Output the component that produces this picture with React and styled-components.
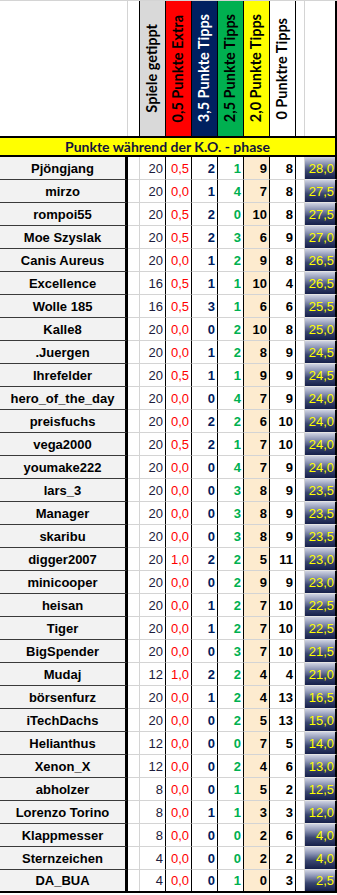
import React from "react";
import styled, { createGlobalStyle } from "styled-components";

const Global = createGlobalStyle`
  html, body { margin: 0; padding: 0; background: #fff; }
  body { font-family: "Liberation Sans", Arial, sans-serif; }
`;

const COLS = "128px 12px repeat(6, 26px) 9px 32px";

const Sheet = styled.div`
  width: 337px;
  display: flex;
  flex-direction: column;
`;

const HeaderRow = styled.div`
  display: grid;
  grid-template-columns: ${COLS};
  height: 136px;
  border-top: 1px solid #d4d4d4;
  box-sizing: border-box;
`;

const HeadCell = styled.div`
  background: ${(p) => p.$bg || "#fff"};
  color: ${(p) => p.$fg || "#000"};
  border-right: ${(p) => (p.$last ? "2px" : "1px")} solid ${(p) => p.$line || "#000"};
  display: flex;
  align-items: center;
  justify-content: center;
  box-sizing: border-box;
`;

const Vertical = styled.span`
  writing-mode: vertical-rl;
  transform: rotate(180deg);
  font-family: Lato, "Open Sans", sans-serif;
  font-weight: 700;
  font-size: 14.5px;
  white-space: nowrap;
  line-height: 1;
`;

const Title = styled.div`
  height: 21px;
  box-sizing: border-box;
  background: #ffff00;
  border-top: 2px solid #000;
  border-bottom: 2px solid #000;
  border-right: 2px solid #000;
  display: flex;
  align-items: center;
  justify-content: center;
  font-family: Lato, "Open Sans", sans-serif;
  font-weight: 700;
  font-size: 14px;
  color: #14143c;
`;

const Row = styled.div`
  display: grid;
  grid-template-columns: ${COLS};
  height: 23px;
  box-sizing: border-box;
  border-bottom: ${(p) => (p.$last ? "2px solid #000" : "none")};
`;

const Cell = styled.div`
  box-sizing: border-box;
  border-right: ${(p) => p.$br || "1px solid #000"};
  border-bottom: ${(p) => (p.$last ? "none" : `1px solid ${p.$hline || "#d4d4d4"}`)};
  background: ${(p) => p.$bg || "#fff"};
  color: ${(p) => p.$fg || "#000"};
  font-family: "Liberation Sans", Arial, sans-serif;
  font-size: 13px;
  font-weight: ${(p) => (p.$bold ? 700 : 400)};
  display: flex;
  align-items: center;
  justify-content: ${(p) => (p.$center ? "center" : "flex-end")};
  padding-right: ${(p) => (p.$center ? "0" : "2px")};
  white-space: nowrap;
  overflow: hidden;
`;

const NameCell = styled(Cell)`
  background: #f2f2f2;
  border-right: 3px solid #000;
  border-bottom: ${(p) => (p.$last ? "none" : "1px solid #3a3a3a")};
  justify-content: center;
  padding-right: 0;
`;

const Score = styled(Cell)`
  background: linear-gradient(180deg, #cfd3e2 0%, #8a93b3 30%, #3a4670 62%, #16204a 100%);
  color: #ffff00;
  border-right: 2px solid #000;
  border-bottom: ${(p) => (p.$last ? "none" : "1px solid #e4e4e4")};
  padding-right: 1px;
`;

const rows = [
  ["Pjöngjang", 20, "0,5", 2, 1, 9, 8, "28,0"],
  ["mirzo", 20, "0,0", 1, 4, 7, 8, "27,5"],
  ["rompoi55", 20, "0,5", 2, 0, 10, 8, "27,5"],
  ["Moe Szyslak", 20, "0,5", 2, 3, 6, 9, "27,0"],
  ["Canis Aureus", 20, "0,0", 1, 2, 9, 8, "26,5"],
  ["Excellence", 16, "0,5", 1, 1, 10, 4, "26,5"],
  ["Wolle 185", 16, "0,5", 3, 1, 6, 6, "25,5"],
  ["Kalle8", 20, "0,0", 0, 2, 10, 8, "25,0"],
  [".Juergen", 20, "0,0", 1, 2, 8, 9, "24,5"],
  ["Ihrefelder", 20, "0,5", 1, 1, 9, 9, "24,5"],
  ["hero_of_the_day", 20, "0,0", 0, 4, 7, 9, "24,0"],
  ["preisfuchs", 20, "0,0", 2, 2, 6, 10, "24,0"],
  ["vega2000", 20, "0,5", 2, 1, 7, 10, "24,0"],
  ["youmake222", 20, "0,0", 0, 4, 7, 9, "24,0"],
  ["lars_3", 20, "0,0", 0, 3, 8, 9, "23,5"],
  ["Manager", 20, "0,0", 0, 3, 8, 9, "23,5"],
  ["skaribu", 20, "0,0", 0, 3, 8, 9, "23,5"],
  ["digger2007", 20, "1,0", 2, 2, 5, 11, "23,0"],
  ["minicooper", 20, "0,0", 0, 2, 9, 9, "23,0"],
  ["heisan", 20, "0,0", 1, 2, 7, 10, "22,5"],
  ["Tiger", 20, "0,0", 1, 2, 7, 10, "22,5"],
  ["BigSpender", 20, "0,0", 0, 3, 7, 10, "21,5"],
  ["Mudaj", 12, "1,0", 2, 2, 4, 4, "21,0"],
  ["börsenfurz", 20, "0,0", 1, 2, 4, 13, "16,5"],
  ["iTechDachs", 20, "0,0", 0, 2, 5, 13, "15,0"],
  ["Helianthus", 12, "0,0", 0, 0, 7, 5, "14,0"],
  ["Xenon_X", 12, "0,0", 0, 2, 4, 6, "13,0"],
  ["abholzer", 8, "0,0", 0, 1, 5, 2, "12,5"],
  ["Lorenzo Torino", 8, "0,0", 1, 1, 3, 3, "12,0"],
  ["Klappmesser", 8, "0,0", 0, 0, 2, 6, "4,0"],
  ["Sternzeichen", 4, "0,0", 0, 0, 2, 2, "4,0"],
  ["DA_BUA", 4, "0,0", 0, 1, 0, 3, "2,5"],
];

const heads = [
  { t: "Spiele getippt", bg: "#d9d9d9", fg: "#000" },
  { t: "0,5 Punkte Extra", bg: "#ff0000", fg: "#000" },
  { t: "3,5 Punkte Tipps", bg: "#002060", fg: "#fff" },
  { t: "2,5 Punkte Tipps", bg: "#00b050", fg: "#000" },
  { t: "2,0 Punkte Tipps", bg: "#ffff00", fg: "#000" },
  { t: "0 Punktre Tipps", bg: "#fff", fg: "#000" },
];

export default function App() {
  return (
    <>
      <Global />
      <Sheet>
        <HeaderRow>
          <HeadCell $line="#d4d4d4" />
          <HeadCell />
          {heads.map((h) => (
            <HeadCell key={h.t} $bg={h.bg} $fg={h.fg}>
              <Vertical>{h.t}</Vertical>
            </HeadCell>
          ))}
          <HeadCell $line="#d4d4d4" />
          <HeadCell $last />
        </HeaderRow>
        <Title>Punkte während der K.O. - phase</Title>
        {rows.map((r, i) => {
          const last = i === rows.length - 1;
          return (
            <Row key={r[0]} $last={last}>
              <NameCell $bold $last={last}>{r[0]}</NameCell>
              <Cell $br="1px solid #d4d4d4" $last={last} />
              <Cell $fg="#1c1c3c" $last={last}>{r[1]}</Cell>
              <Cell $fg="#ff0000" $last={last}>{r[2]}</Cell>
              <Cell $fg="#002060" $bold $last={last}>{r[3]}</Cell>
              <Cell $fg="#00b050" $bold $last={last}>{r[4]}</Cell>
              <Cell $bg="#fdebcf" $bold $last={last}>{r[5]}</Cell>
              <Cell $bold $last={last}>{r[6]}</Cell>
              <Cell $br="1px solid #d4d4d4" $last={last} />
              <Score $last={last}>{r[7]}</Score>
            </Row>
          );
        })}
      </Sheet>
    </>
  );
}
